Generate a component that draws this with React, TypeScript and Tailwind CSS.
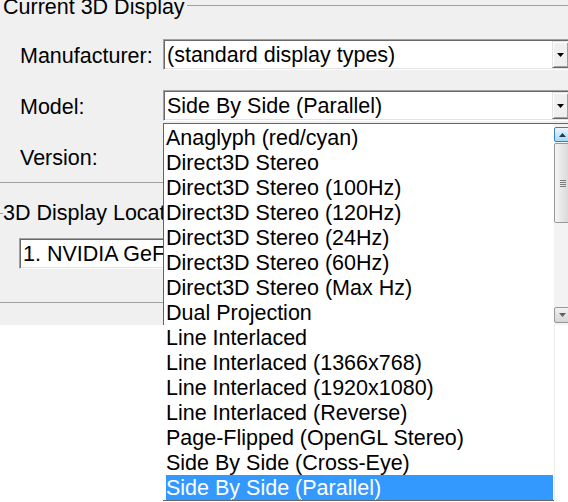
const models = [
  'Anaglyph (red/cyan)',
  'Direct3D Stereo',
  'Direct3D Stereo (100Hz)',
  'Direct3D Stereo (120Hz)',
  'Direct3D Stereo (24Hz)',
  'Direct3D Stereo (60Hz)',
  'Direct3D Stereo (Max Hz)',
  'Dual Projection',
  'Line Interlaced',
  'Line Interlaced (1366x768)',
  'Line Interlaced (1920x1080)',
  'Line Interlaced (Reverse)',
  'Page-Flipped (OpenGL Stereo)',
  'Side By Side (Cross-Eye)',
  'Side By Side (Parallel)',
];
const selected = models.length - 1;
const visibleRows = 8;

function Triangle({ up, color }: { up?: boolean; color: string }) {
  return (
    <svg width="7" height="4" viewBox="0 0 7 4" className="block">
      <path d={up ? 'M0 4 L3.5 0 L7 4 Z' : 'M0 0 L7 0 L3.5 4 Z'} fill={color} />
    </svg>
  );
}

function Combo({ text, className }: { text: string; className?: string }) {
  return (
    <div
      className={`flex h-[31px] p-[1px] bg-white border border-[#a0a0a0] border-r-white border-b-white shadow-[inset_1px_1px_0_#696969,inset_-1px_-1px_0_#e3e3e3] ${className ?? ''}`}
    >
      <div className="flex-1 min-w-0 flex items-center pl-[2px] pt-[2px] whitespace-nowrap overflow-hidden">{text}</div>
      <div className="w-[17px] shrink-0 flex items-center justify-center bg-[#f0f0f0] border border-[#e3e3e3] border-r-[#696969] border-b-[#696969] shadow-[inset_1px_1px_0_#fff,inset_-1px_-1px_0_#a0a0a0]">
        <Triangle color="#000" />
      </div>
    </div>
  );
}

function Row({ label, text, className }: { label: string; text: string; className?: string }) {
  return (
    <div className={`flex items-start ${className ?? ''}`}>
      <span className="w-[163px] shrink-0 pl-[20px] pt-[5px] leading-[25px]">{label}</span>
      <Combo text={text} className="flex-1" />
    </div>
  );
}

function ScrollBar() {
  return (
    <div className="w-[17px] shrink-0 flex flex-col pt-[3px] pb-[2px] bg-[#f3f3f3]">
      <div className="h-[15px] rounded-[2px] border border-[#3c7fb1] bg-linear-to-b from-[#eaf6fd] to-[#a7d9f5] flex items-center justify-center">
        <Triangle up color="#1c3c5a" />
      </div>
      <div className="mt-[1px] h-[80px] rounded-[2px] border border-[#979797] bg-linear-to-r from-[#f5f5f5] to-[#d6d6d6] flex flex-col items-center justify-center gap-[1px]">
        {[0, 1, 2, 3].map((i) => (
          <div key={i} className="w-[6px] h-[1px] bg-[#7c7c7c]" />
        ))}
      </div>
      <div className="flex-1" />
      <div className="h-[16px] rounded-[2px] border border-[#979797] bg-linear-to-b from-[#f2f2f2] to-[#d5d5d5] flex items-center justify-center">
        <Triangle color="#606060" />
      </div>
    </div>
  );
}

function Item({ name, active }: { name: string; active: boolean }) {
  return (
    <div
      className={`h-[25px] leading-[25px] pt-[1px] whitespace-nowrap ${
        active ? 'bg-[#3399ff] text-white outline-1 outline-dotted -outline-offset-1 outline-[#c8742e]' : ''
      }`}
    >
      {name}
    </div>
  );
}

function ModelList() {
  return (
    <div className="absolute left-[163px] top-[123px] w-[408px] flex flex-col">
      <div className="flex bg-white border-t border-l border-[#646464]">
        <div className="flex-1 pl-[2px] pr-[1px] pt-[1px]">
          {models.slice(0, visibleRows).map((m, i) => (
            <Item key={m} name={m} active={i === selected} />
          ))}
        </div>
        <ScrollBar />
      </div>
      <div className="flex bg-white">
        <div className="w-[391px] pl-[3px] pr-[1px] border-b border-[#646464]">
          {models.slice(visibleRows).map((m, i) => (
            <Item key={m} name={m} active={i + visibleRows === selected} />
          ))}
        </div>
        <div className="w-[17px] border-l border-[#ebebeb]" />
      </div>
    </div>
  );
}

export default function App() {
  return (
    <div className="relative w-[568px] h-[502px] overflow-hidden bg-white text-black text-[21.5px] font-['Liberation_Sans',Arial,sans-serif]">
      <div className="w-[571px] h-[325px] bg-[#f0f0f0] flex flex-col">
        <div className="flex items-start h-[39px] shrink-0">
          <span className="-mt-[5px] ml-[3px] leading-[25px] whitespace-nowrap">Current 3D Display</span>
          <div className="flex-1 ml-[2px] mt-[5px] border-t border-[#a0a0a0]" />
        </div>
        <Row label="Manufacturer:" text="(standard display types)" />
        <Row label="Model:" text="Side By Side (Parallel)" className="mt-[20px]" />
        <Row label="Version:" text="" className="mt-[20px]" />
        <div className="mt-[10px] border-t border-[#a0a0a0]" />
        <div className="flex items-start mt-[18px] h-[25px]">
          <div className="w-[3px] mt-[12px] border-t border-[#a0a0a0]" />
          <span className="leading-[25px] whitespace-nowrap">3D Display Location</span>
        </div>
        <Combo text="1. NVIDIA GeForce GTX 660" className="mt-[12px] ml-[19px] w-[200px]" />
        <div className="mt-[33px] border-t border-[#a0a0a0]" />
      </div>
      <ModelList />
    </div>
  );
}
